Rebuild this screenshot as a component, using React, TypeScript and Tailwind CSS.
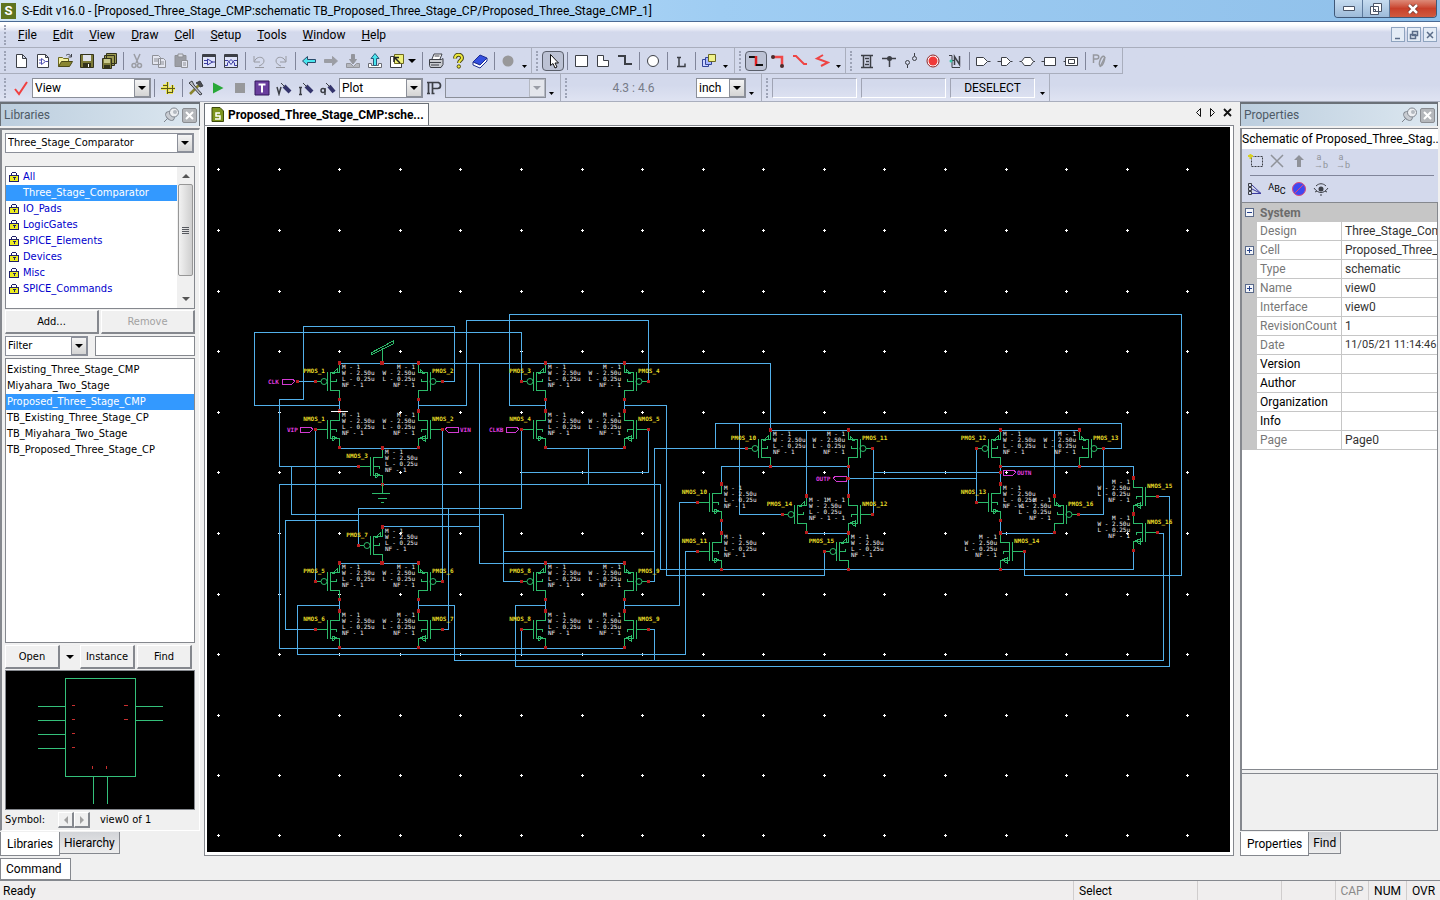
import type { ReactNode } from 'react'
import clsx from 'clsx'

/* ---------- schematic data ---------- */

type Device = { x: number; y: number; kind: 'P' | 'N'; name: string; flip?: boolean; params?: string[] }

const PARAMS = ['M - 1', 'W - 2.50u', 'L - 0.25u', 'NF - 1']

const DEVICES: Device[] = [
  { x: 339, y: 363, kind: 'P', name: 'PMOS_1' },
  { x: 418, y: 363, kind: 'P', name: 'PMOS_2', flip: true },
  { x: 339, y: 411, kind: 'N', name: 'NMOS_1' },
  { x: 418, y: 411, kind: 'N', name: 'NMOS_2', flip: true },
  { x: 382, y: 448, kind: 'N', name: 'NMOS_3' },
  { x: 545, y: 363, kind: 'P', name: 'PMOS_3' },
  { x: 624, y: 363, kind: 'P', name: 'PMOS_4', flip: true },
  { x: 545, y: 411, kind: 'N', name: 'NMOS_4' },
  { x: 624, y: 411, kind: 'N', name: 'NMOS_5', flip: true },
  { x: 382, y: 527, kind: 'P', name: 'PMOS_7' },
  { x: 339, y: 563, kind: 'P', name: 'PMOS_5' },
  { x: 418, y: 563, kind: 'P', name: 'PMOS_6', flip: true },
  { x: 339, y: 611, kind: 'N', name: 'NMOS_6' },
  { x: 418, y: 611, kind: 'N', name: 'NMOS_7', flip: true },
  { x: 545, y: 563, kind: 'P', name: 'PMOS_8' },
  { x: 624, y: 563, kind: 'P', name: 'PMOS_9', flip: true },
  { x: 545, y: 611, kind: 'N', name: 'NMOS_8' },
  { x: 624, y: 611, kind: 'N', name: 'NMOS_9', flip: true },
  { x: 770, y: 430, kind: 'P', name: 'PMOS_10' },
  { x: 848, y: 430, kind: 'P', name: 'PMOS_11', flip: true },
  { x: 721, y: 484, kind: 'N', name: 'NMOS_10' },
  { x: 721, y: 533, kind: 'N', name: 'NMOS_11' },
  { x: 806, y: 496, kind: 'P', name: 'PMOS_14' },
  // shares the W and L lines of PMOS_14
  { x: 848, y: 496, kind: 'N', name: 'NMOS_12', flip: true, params: ['M - 1', '', '', '- 1'] },
  { x: 848, y: 533, kind: 'P', name: 'PMOS_15' },
  { x: 1000, y: 430, kind: 'P', name: 'PMOS_12' },
  { x: 1079, y: 430, kind: 'P', name: 'PMOS_13', flip: true },
  { x: 1000, y: 484, kind: 'N', name: 'NMOS_13' },
  { x: 1054, y: 496, kind: 'P', name: 'PMOS_16', flip: true },
  { x: 1000, y: 533, kind: 'N', name: 'NMOS_14', flip: true },
  { x: 1133, y: 478, kind: 'N', name: 'NMOS_15', flip: true },
  { x: 1133, y: 514, kind: 'N', name: 'NMOS_16', flip: true },
]

const WIRES = [
  '358,466 279,466 279,399 303,399 303,326 454,326 454,381 442,381',
  '339,405 254,405 254,332 521,332 521,381',
  '418,405 466,405 466,320 648,320 648,381',
  '545,405 509,405 509,314 1181,314 1181,575 1024,575 1024,551',
  '339,363 770,363 770,430',
  '339,399 339,411',
  '418,399 418,411',
  '545,399 545,411',
  '624,399 624,411',
  '297,381 315,381',
  '339,448 418,448',
  '315,429 315,581',
  '442,429 442,581',
  '291,466 291,514 503,514 503,581 521,581',
  '503,551 654,551',
  '545,448 624,448',
  '588,448 588,484',
  '648,429 648,472 521,472',
  '521,429 521,508 358,508 358,545',
  '624,648 279,648 279,484 660,484 660,569 1133,569 1133,551',
  '358,520 285,520 285,629 315,629',
  '448,508 448,629 442,629',
  '382,526 479,526',
  '479,363 479,563 624,563',
  '339,563 418,563',
  '339,599 339,611',
  '418,599 418,611',
  '545,599 545,611',
  '624,599 624,611',
  '339,605 297,605 297,654 685,654 685,551 697,551',
  '418,605 454,605 454,660 1163,660 1163,533 1157,533',
  '545,605 515,605 515,666 1169,666 1169,496 1157,496',
  '624,605 679,605 679,502 697,502',
  '521,629 521,654',
  '648,629 654,629 654,660',
  '648,581 654,581 654,448 746,448',
  '624,405 666,405 666,575 824,575 824,551',
  '715,448 715,423 1121,423 1121,448 1103,448',
  '739,423 739,514 782,514',
  '770,430 1079,430',
  '721,484 721,466 848,466 848,496',
  '806,430 806,496',
  '873,448 873,514',
  '873,472 1000,472',
  '848,478 976,478',
  '976,448 976,502',
  '1000,484 1000,466 1133,466 1133,478',
  '1054,430 1054,496',
  '1103,448 1103,514 1079,514',
  '721,520 721,533',
  '806,533 848,533',
  '1000,520 1000,533 1054,533',
]

// port marker boxes: text sits left or right of the arrow body
const PORTS = [
  { d: 'M282 379h10l3 2l-3 3h-10z', name: 'CLK', x: 268, y: 384 },
  { d: 'M300 427h10l3 2l-3 3h-10z', name: 'VIP', x: 287, y: 432 },
  { d: 'M458 427h-10l-3 2l3 3h10z', name: 'VIN', x: 460, y: 432 },
  { d: 'M506 427h10l3 2l-3 3h-10z', name: 'CLKB', x: 489, y: 432 },
  { d: 'M846 476h-10l-3 2l3 3h10z', name: 'OUTP', x: 816, y: 481 },
  { d: 'M1003 470h10l3 2l-3 3h-10z', name: 'OUTN', x: 1017, y: 475 },
]

const GRID_X = [218, 279, 339, 400, 460, 521, 582, 642, 703, 763, 824, 884, 945, 1006, 1066, 1127, 1187]
const GRID_Y = [169, 230, 291, 351, 412, 472, 533, 594, 654, 715, 775, 835]

function Mosfet({ x, y, kind, name, flip, params = PARAMS }: Device) {
  const s = flip ? -1 : 1
  const px = (n: number) => x + s * n
  const arrowY = kind === 'P' ? y + 9 : y + 27
  return (
    <g>
      <g fill="none" stroke="#2cba6a">
        <path d={`M${x} ${y}V${y + 9}H${px(-9)}M${px(-9)} ${y + 9}V${y + 28}M${px(-12)} ${y + 9}V${y + 28}`} />
        <path d={`M${px(-9)} ${y + 27}H${x}V${y + 36}M${px(-9)} ${y + 18}H${px(-3)}v${kind === 'P' ? -2 : 3}`} />
        <path d={kind === 'P'
          ? `M${px(-2)} ${arrowY}L${px(-7)} ${arrowY + 2}L${px(-2)} ${arrowY - 3}Z`
          : `M${px(-2)} ${arrowY}L${px(-7)} ${arrowY - 2}L${px(-7)} ${arrowY + 3}Z`} />
        {kind === 'P'
          ? <><circle cx={px(-15)} cy={y + 18.5} r="3" shapeRendering="auto" /><path d={`M${px(-18)} ${y + 18}H${px(-24)}`} /></>
          : <path d={`M${px(-12)} ${y + 18}H${px(-24)}`} />}
      </g>
      <g fill="#b81c1c">
        <rect x={x - 1} y={y - 2} width="3" height="4" />
        <rect x={x - 1} y={y + 35} width="3" height="3" />
        <rect x={px(-24) - 1} y={y + 17} width="3" height="3" />
      </g>
      <text x={px(-14)} y={y + 10} fill="#e6dc28" textAnchor={flip ? 'start' : 'end'} className="text-[6px] font-bold">
        {name}
      </text>
      {params.map((p, i) => p && (
        <text key={i} x={px(3)} y={y + 6 + i * 6} fill="#f0f0f0" textAnchor={flip ? 'end' : 'start'} className="text-[6px]">
          {p}
        </text>
      ))}
    </g>
  )
}

function Schematic() {
  return (
    <svg className="block h-full w-full font-['DejaVu_Sans_Mono',monospace]" role="img" aria-label="Schematic">
      <g transform="translate(-207 -127)" shapeRendering="crispEdges">
        <path
          stroke="#fff"
          d={GRID_Y.map(y => GRID_X.map(x => `M${x - 1} ${y + 0.5}h3M${x + 0.5} ${y - 1}v3`).join('')).join('')}
        />
        <g fill="none" stroke="#52b0ea">
          {WIRES.map(w => <polyline key={w} points={w} />)}
        </g>
        {DEVICES.map(d => <Mosfet key={d.name} {...d} />)}
        {/* supply and ground */}
        <path d="M382 363V348M371 353L393 341v3L371 355Z" fill="none" stroke="#2cba6a" />
        <path d="M382 484v9M372 493h18M378 498h9M381 502h3" fill="none" stroke="#2cba6a" />
        <path d="M331 411h17" stroke="#fff" />
        {PORTS.map(p => (
          <g key={p.name}>
            <path d={p.d} fill="none" stroke="#d23ad2" />
            <text x={p.x} y={p.y} fill="#e03ce0" className="text-[6px] font-bold">{p.name}</text>
          </g>
        ))}
        <g fill="#b81c1c">
          <rect x="296" y="380" width="3" height="3" />
          <rect x="846" y="477" width="4" height="3" />
          <rect x="999" y="471" width="3" height="3" />
          <rect x="380" y="361" width="4" height="4" />
          <rect x="380" y="561" width="4" height="4" />
        </g>
      </g>
    </svg>
  )
}

/* ---------- icons (16x16) ---------- */

function Svg({ children }: { children: ReactNode }) {
  return (
    <svg width="16" height="16" viewBox="0 0 16 16" fill="none" stroke="#3c3f46" aria-hidden="true">
      {children}
    </svg>
  )
}

const ICONS: Record<string, ReactNode> = {
  New: <path d="M3.500 1.500h6l4 4v9h-10zM9.500 1.500v4h4" fill="#fff" />,
  'New view': <><path d="M2.500 1.500h8l3 3v10h-11zM10.500 1.500v3h3" fill="#fff" /><path d="M6.500 5.500v6l4-3zM4 7h2M4 10h2M11 8.500h2" stroke="#5050b0" /></>,
  Open: <><path d="M1.500 13.500v-9h4l1 1h5v3" fill="#f4f0a0" stroke="#6c6820" /><path d="M1.500 13.500l3-5h11l-3 5z" fill="#8a8630" stroke="#4c4a18" /><path d="M9 2.500c2-2 4-1 5 1M14.500 1v3h-3" /></>,
  Save: <><path d="M1.500 1.500h13v13h-13z" fill="#7c7a38" stroke="#33331c" /><path d="M4 2h8v6H4z" fill="#dfe2ec" stroke="none" /><path d="M4 10h8v4H4z" fill="#33331c" stroke="none" /><path d="M9.500 11v3" stroke="#fff" /></>,
  'Save all': <><path d="M5.500.500h10v10h-10zM3.500 2.500h10v10h-10z" fill="#9a9850" stroke="#33331c" /><path d="M1.500 5.500h9v10h-9z" fill="#7c7a38" stroke="#33331c" /><path d="M3 6h6v4H3z" fill="#c9c98c" stroke="none" /><path d="M3 12h6v3H3z" fill="#33331c" stroke="none" /></>,
  Cut: <g stroke="#9b9da4" strokeWidth="1.500"><path d="M5 1l4 9M11 1L7 10" /><circle cx="5" cy="12.500" r="2" /><circle cx="10.500" cy="12.500" r="2" /></g>,
  Copy: <g stroke="#8f9198" fill="#e4e6f0"><path d="M1.500 2.500h6l2 2v7h-8zM7.500 5.500h5l2 2v7h-7z" /><path d="M3 6h4M3 8h4M9 9h4M9 11h4" /></g>,
  Paste: <g stroke="#8f9196"><path d="M2 2.500h11v11H2z" fill="#9b9da4" /><path d="M5 1h5v3H5z" fill="#dcdee6" /><path d="M8.500 7.500h6v7h-6z" fill="#e4e6f0" /><path d="M10 10h3M10 12h3" /></g>,
  'Schematic view': <><path d="M1.500 1.500h13v13h-13z" fill="#dfe4fa" /><path d="M2 3h12" strokeWidth="2" /><path d="M6.500 6v6l5-3zM3 7.500h3M3 10.500h3M11 9h3" stroke="#3c3ca0" /></>,
  'Symbol view': <><path d="M1.500 1.500h13v13h-13z" fill="#dfe4fa" /><path d="M2 3h12" strokeWidth="2" /><path d="M2 12.500h2.500V10L8 6.500l3.500 3.500v2.500H14M2 7.500h3l3 4 3-4h3" stroke="#3c3ca0" /></>,
  Undo: <path d="M3 3v6h6M3.500 8.500C5 3 13 3 13 8c0 2-2 4-5 5M4 14.500h9" stroke="#989aa2" />,
  Redo: <path d="M13 3v6H7M12.500 8.500C11 3 3 3 3 8c0 2 2 4 5 5M3 14.500h9" stroke="#989aa2" />,
  Back: <path d="M1.500 8l5-4.500v3h8v3h-8v3z" fill="#4be6ee" stroke="#2b4a6a" />,
  Forward: <path d="M14.500 8l-5-4.500v3h-8v3h8v3z" fill="#9b9da4" stroke="#9b9da4" />,
  'Push in': <g stroke="#93959c"><path d="M8 11L4.500 6.500h2v-5h3v5h2z" fill="#93959c" /><path d="M1.500 10.500v4h13v-4h-3l-3 3-3-3z" fill="#b5b7be" /></g>,
  'Pop out': <><path d="M1.500 10.500v4h13v-4h-3v2h-7v-2z" fill="#fff" stroke="#6a6c74" /><path d="M8 .500L4 5.500h2.500v7h3v-7H12z" fill="#4be6ee" stroke="#235a7a" /></>,
  Goto: <><path d="M1.500 3.500h11v11h-11z" fill="#fff" /><path d="M5.500 1.500h9v9h-9z" fill="#eef07a" stroke="#6c6820" /><path d="M11 10L6 5M5 9V4.500h5" stroke="#222" strokeWidth="1.500" /></>,
  Print: <><path d="M4 6l2-5h8l-2 5" fill="#fff" /><path d="M1.500 6.500h12l1.500-1v6l-2 3H2.500l-1-2z" fill="#c9cbd0" /><path d="M2 9.500h11M3 12h8" /><path d="M6.500 3h5" /></>,
  Help: <><path d="M5 5.500C5 .500 12 .500 12 5c0 2.500-3 2-3 5" stroke="#4a4818" strokeWidth="4" /><path d="M5 5.500C5 .500 12 .500 12 5c0 2.500-3 2-3 5" stroke="#eee93a" strokeWidth="2" /><circle cx="8.800" cy="13.500" r="1.700" fill="#eee93a" stroke="#4a4818" /></>,
  Book: <><path d="M1 9l7-7 7 3-7 7z" fill="#3450e0" stroke="#1c2c90" /><path d="M1 9v3l7 3 7-7V5l-7 7z" fill="#fff" stroke="#1c2c90" /></>,
  Record: <circle cx="8" cy="8" r="5.500" fill="#98989a" stroke="none" />,
  Select: <path d="M5.500 1.500v11l2.500-2 2 4.500 2-1-2-4h3.500z" fill="#fff" stroke="#111" />,
  Box: <path d="M2.500 2.500h12v11h-12z" fill="#fff" />,
  Polygon: <path d="M2.500 2.500h6v5h5v6h-11z" fill="#fff" />,
  Path: <path d="M1 3h7v8h7" strokeWidth="2" />,
  Circle: <circle cx="8" cy="8" r="5.500" fill="#fff" />,
  Label: <path d="M6 4v10M4 4.500h4M4 13.500h8v-3" strokeWidth="1.500" />,
  Stack: <><path d="M1.500 6.500h6v7h-6z" fill="#ccd4ff" stroke="#33459a" /><path d="M4.500 4.500h6v7h-6z" fill="#aab8ff" stroke="#33459a" /><path d="M7.500 1.500h7v7h-7z" fill="#f0f28a" stroke="#6c6820" /></>,
  'Wire 90': <><path d="M1 4h6" stroke="#111" strokeWidth="2" /><path d="M8 3v10" stroke="#e02020" strokeWidth="2.500" /><path d="M8 12h7" stroke="#111" strokeWidth="2" /></>,
  'Wire corner': <><path d="M3 4h9v9" stroke="#f04848" strokeWidth="2.500" /><circle cx="3" cy="4" r="2" fill="#4c2c2c" stroke="none" /><circle cx="12" cy="13" r="2" fill="#4c2c2c" stroke="none" /></>,
  'Wire 45': <path d="M1 3h3l8 8h3" stroke="#ee4444" strokeWidth="2" />,
  'Wire any': <path d="M9 2L3 5.500l11 4L7 13" stroke="#ee4444" strokeWidth="2" />,
  Net: <path d="M2 2.500h12M2 14.500h12M4.500 3v11M11.500 3v11M6 5.500h4M7 8.500h3M6 11.500h4" strokeWidth="1.500" />,
  Solder: <><path d="M1 5.500h14M8.500 5v9" strokeWidth="1.500" /><circle cx="8.500" cy="5.500" r="2.500" fill="#3c3f46" stroke="none" /></>,
  Nodes: <><circle cx="4.500" cy="9.500" r="2" /><circle cx="11.500" cy="5.500" r="2" /><path d="M4.500 12v3M11.500 3V0" /></>,
  Stop: <><circle cx="8" cy="8" r="6" fill="#fff" stroke="#8a2020" /><circle cx="8" cy="8" r="4.500" fill="#f03a3a" stroke="none" /></>,
  Name: <><path d="M2 2.500h3v12h8M3 7.500h4" /><path d="M7.500 12V3.500l5 8V3" strokeWidth="1.500" /><circle cx="4" cy="8" r="1.500" fill="#38c8a8" stroke="none" /></>,
  'In port': <path d="M1.500 4.500h7l4 4-4 4h-7zM12.500 8.500h3" fill="#fff" />,
  'Out port': <path d="M4.500 4.500h5l4 4-4 4h-5zM13.500 8.500h2M.500 8.500h4" fill="#fff" />,
  'Bidir port': <path d="M5.500 4.500h6l3 4-3 4h-6l-3-4zM.500 8.500h2M14.500 8.500h1.500" fill="#fff" />,
  'Other port': <path d="M3.500 4.500h11v8h-11zM.500 8.500h3" fill="#fff" />,
  'Global port': <path d="M2.500 4.500h12v8h-12zM5.500 6.500h6v4h-6zM.500 8.500h2" fill="#fff" />,
  'Property text': <g stroke="#96989e" strokeWidth="1.500"><path d="M2.500 10V2h3c3 0 3 4 0 4h-3M9 14l5-10" /><ellipse cx="11" cy="8" rx="2" ry="5" transform="rotate(20 11 8)" /></g>,
  Check: <path d="M2 9l4 5 8-12" stroke="#f04040" strokeWidth="2" />,
  Probe: <><path d="M7.500 2v12M1 8.500h14M3 5.500h5M12.500 5v7M7 12.500h6" stroke="#ece65a" strokeWidth="3" /><path d="M7.500 2v12M1 8.500h14M3 5.500h5M12.500 5v7M7 12.500h6" stroke="#5c5a18" /></>,
  Tools: <><path d="M2 14L11 5" stroke="#8a8630" strokeWidth="2.500" /><path d="M8 3l4-2 3 5-3 1-2-3z" fill="#4a4c50" /><path d="M1 3l3-2 2 4 8 9-2 1-8-9z" fill="#b9bcc4" /></>,
  Run: <path d="M3 2.500v11L13.500 8z" fill="#28a838" stroke="none" />,
  Halt: <path d="M3 3h10v10H3z" fill="#97989b" stroke="none" />,
  Trace: <><path d="M1 1h14v14H1z" fill="#6a3f9e" stroke="#32195a" /><path d="M4.500 4.500h7M8 4.500v8" stroke="#fff" strokeWidth="2" /></>,
  'Probe V': <><path d="M1 7l2 7 2-7" strokeWidth="1.500" /><path d="M8 6l6 6" stroke="#34346c" strokeWidth="4" /><path d="M5 3l4 4" /></>,
  'Probe I': <><path d="M2.500 7v8M1 7.500h3M1 14.500h3" strokeWidth="1.500" /><path d="M8 6l6 6" stroke="#34346c" strokeWidth="4" /><path d="M5 3l4 4" /></>,
  'Probe Q': <><circle cx="3" cy="10.500" r="2" strokeWidth="1.500" /><path d="M5 8v7" strokeWidth="1.500" /><path d="M9 6l5 6" stroke="#34346c" strokeWidth="4" /><path d="M6 3l4 4" /></>,
  Instance: <path d="M2.500 2v12M6.500 2v12M1 2.500h12M1 13.500h3M5.500 13.500h3M6.500 8.500h5c4 0 4-6 0-6" strokeWidth="1.700" />,
  'Add property': <><path d="M4.500 3.500h11v10h-11z" strokeDasharray="2 1" /><path d="M1 3h5M3.500 1v5" stroke="#d8d020" strokeWidth="2" /></>,
  Delete: <path d="M2 2l12 12M14 2L2 14" stroke="#8f9299" strokeWidth="1.500" />,
  Promote: <path d="M8 2l5 5h-3v7H6V7H3z" fill="#8f9299" stroke="none" />,
  Filter: <><path d="M1.500 2.500h3v3h-3zM1.500 6.500h3v3h-3zM1.500 10.500h3v3h-3z" /><path d="M5 4l9 8.500H5M5 8l9 4.500" stroke="#3c3ca0" /></>,
  Hide: <><circle cx="8" cy="8" r="6.500" fill="#4048f0" stroke="#e04878" /><path d="M4 12l8-8" stroke="#e04878" /></>,
  Eye: <><path d="M1 7c4 6 10 6 14 0M2 11l2-1M8 13v2M14 11l-2-1M3 5c3-3 7-3 10 0" /><circle cx="8" cy="8" r="2.500" fill="#3c3f46" stroke="none" /></>,
}

function Tool({ name, on }: { name: string; on?: boolean }) {
  return (
    <button
      type="button"
      title={name}
      className={clsx(
        'flex h-5 w-[22px] shrink-0 items-center justify-center',
        on && 'rounded-sm border border-[#5a5f6b] bg-[#bcc2d4]'
      )}
    >
      <Svg>{ICONS[name]}</Svg>
    </button>
  )
}

const Tools = ({ names }: { names: string[] }) => <>{names.map(n => <Tool key={n} name={n} />)}</>
const Sep = () => <span className="flex h-[18px] w-[6px] shrink-0 justify-center"><span className="w-px bg-[#80859a]" /></span>

function Down({ className = 'text-black' }: { className?: string }) {
  return <svg width="8" height="4" viewBox="0 0 8 4" className={className} aria-hidden="true"><path d="M0 0h8L4 4z" fill="currentColor" /></svg>
}

function More() {
  return (
    <button type="button" title="Toolbar options" className="flex h-[18px] w-[11px] shrink-0 items-end justify-center pb-[2px]">
      <svg width="5" height="3" viewBox="0 0 5 3"><path d="M0 0h5L2.500 3z" /></svg>
    </button>
  )
}

function Bar({ children, className }: { children: ReactNode; className?: string }) {
  return (
    <div className={clsx('flex shrink-0 items-center border-r border-b border-[#a9aebd]', className)}>
      <span className="mr-1 ml-1 h-5 border-l-2 border-dotted border-[#9da3b6]" />
      {children}
    </div>
  )
}

function Combo({ label, value, className, disabled }: { label: string; value: string; className?: string; disabled?: boolean }) {
  return (
    <span className={clsx('relative block h-5 shrink-0 border border-[#8b8f99]', disabled ? 'bg-[#d3d9ec]' : 'bg-white', className)}>
      <select
        aria-label={label}
        disabled={disabled}
        defaultValue={value}
        className="block h-full w-full appearance-none bg-transparent pr-4 pl-[2px] outline-none"
      >
        <option>{value}</option>
      </select>
      <span className={clsx('pointer-events-none absolute inset-y-0 right-0 flex w-4 items-center justify-center border', disabled ? 'border-[#b4b8c2] bg-[#e4e6ec]' : 'border-[#8b8f99] bg-linear-to-b from-[#f4f4f4] to-[#d4d4d4]')}>
        <Down className={disabled ? 'text-[#9a9da6]' : 'text-black'} />
      </span>
    </span>
  )
}

/* ---------- window chrome ---------- */

const MENUS = ['File', 'Edit', 'View', 'Draw', 'Cell', 'Setup', 'Tools', 'Window', 'Help']

function TitleBar() {
  return (
    <header className="flex h-[22px] items-center border-b border-[#4a6a94] bg-linear-to-r from-[#d4e7f7] via-[#9fcdf3] to-[#8fc0ea]">
      <span className="ml-px flex h-4 w-[15px] items-center justify-center bg-[#5f7420] text-[13px] font-bold text-white">S</span>
      <h1 className="ml-[6px] flex-1 truncate">
        S-Edit v16.0 - [Proposed_Three_Stage_CMP:schematic TB_Proposed_Three_Stage_CP/Proposed_Three_Stage_CMP_1]
      </h1>
      <div className="mr-[3px] flex h-[18px] self-start overflow-hidden rounded-b border border-t-0 border-[#3f5878]">
        <button type="button" title="Minimize" className="flex w-7 items-center justify-center border-r border-[#5d7a9c] bg-linear-to-b from-[#c6dcf0] to-[#9dbbd9]">
          <svg width="12" height="5"><path d="M.5.500h11v4H.5z" fill="#fff" stroke="#4a5568" /></svg>
        </button>
        <button type="button" title="Restore" className="flex w-[27px] items-center justify-center border-r border-[#5d7a9c] bg-linear-to-b from-[#c6dcf0] to-[#9dbbd9]">
          <svg width="12" height="12" fill="#fff" stroke="#4a5568"><path d="M3.500.500h8v8h-8zM.500 3.500h8v8h-8zM3.500 6.500h2v2h-2z" /></svg>
        </button>
        <button type="button" title="Close" className="flex w-[46px] items-center justify-center bg-linear-to-b from-[#dd8a78] via-[#c8402a] to-[#d05a40]">
          <svg width="12" height="10" fill="none"><path d="M2 1l8 8M10 1L2 9" stroke="#6b3028" strokeWidth="4" /><path d="M2 1l8 8M10 1L2 9" stroke="#fff" strokeWidth="2.500" /></svg>
        </button>
      </div>
    </header>
  )
}

const MDI = [
  { name: 'Minimize view', d: 'M3 9.500h5' },
  { name: 'Restore view', d: 'M4.500 2.500h5v4h-5zM2.500 5.500h5v4h-5z' },
  { name: 'Close view', d: 'M3 3l6 6M9 3L3 9' },
]

function MenuBar() {
  return (
    <nav className="flex h-[26px] items-center border-b border-[#a9aebd] bg-linear-to-b from-white from-10% via-[#e6e9f5] via-30% to-[#d3d9ec] to-40%">
      <span className="mr-1 ml-1 h-5 border-l-2 border-dotted border-[#9da3b6]" />
      {MENUS.map(m => (
        <button key={m} type="button" className="px-2"><u>{m[0]}</u>{m.slice(1)}</button>
      ))}
      <span className="ml-auto flex gap-[2px] pr-[3px]">
        {MDI.map(b => (
          <button key={b.name} type="button" title={b.name} className="flex h-[15px] w-[14px] items-center justify-center border border-[#8fa4bf] bg-[#e4ecf6]">
            <svg width="12" height="12" fill="none" stroke="#5a6c88" strokeWidth="1.500"><path d={b.d} /></svg>
          </button>
        ))}
      </span>
    </nav>
  )
}

const Field = () => <span className="mr-1 h-5 w-[85px] border border-[#a0a4b4] border-r-white border-b-white" />

function Toolbars() {
  return (
    <div className="border-b border-[#a9aebd] bg-linear-to-b from-[#d3d9ec] from-70% to-[#dfe3f2]">
      <div className="flex h-[26px]">
        <Bar className="pr-px">
          <Tools names={['New', 'New view', 'Open', 'Save', 'Save all']} />
          <Sep />
          <Tools names={['Cut', 'Copy', 'Paste']} />
          <Sep />
          <Tools names={['Schematic view', 'Symbol view']} />
          <Sep />
          <Tools names={['Undo', 'Redo']} />
          <Sep />
          <Tools names={['Back', 'Forward', 'Push in', 'Pop out', 'Goto']} />
          <button type="button" title="Go to list" className="w-[11px]"><Down /></button>
          <Sep />
          <Tools names={['Print', 'Help', 'Book']} />
          <Sep />
          <Tool name="Record" />
          <More />
        </Bar>
        <Bar className="pr-[3px]">
          <Tool name="Select" on />
          <Sep />
          <Tools names={['Box', 'Polygon', 'Path']} />
          <Sep />
          <Tool name="Circle" />
          <Sep />
          <Tool name="Label" />
          <Sep />
          <Tool name="Stack" />
          <More />
        </Bar>
        <Bar className="pr-px">
          <Tool name="Wire 90" on />
          <Tools names={['Wire corner', 'Wire 45', 'Wire any']} />
          <More />
        </Bar>
        <Bar className="pr-px">
          <Tools names={['Net', 'Solder', 'Nodes', 'Stop', 'Name']} />
          <Sep />
          <Tools names={['In port', 'Out port', 'Bidir port', 'Other port', 'Global port']} />
          <Sep />
          <Tool name="Property text" />
          <More />
        </Bar>
      </div>
      <div className="flex h-[27px]">
        <Bar className="border-b-0 pr-[3px]">
          <Tool name="Check" />
          <Combo label="Mode" value="View" className="w-[119px]" />
          <Sep />
          <Tool name="Probe" />
          <Sep />
          <Tools names={['Tools', 'Run', 'Halt', 'Trace', 'Probe V', 'Probe I', 'Probe Q']} />
          <Combo label="Plot" value="Plot" className="w-[84px]" />
          <Tool name="Instance" />
          <Combo label="Instance" value="" className="w-[101px]" disabled />
          <More />
        </Bar>
        <Bar className="border-b-0 pr-1">
          <span className="w-[125px] text-center text-[#777b88]">4.3 : 4.6</span>
          <Combo label="Units" value="inch" className="w-[50px]" />
          <More />
        </Bar>
        <Bar className="border-b-0 pr-px">
          <Field />
          <Field />
          <button type="button" className="mr-[2px] h-5 w-[85px] border border-[#a0a4b4] border-r-white border-b-white">DESELECT</button>
          <More />
        </Bar>
      </div>
    </div>
  )
}

/* ---------- docked panels ---------- */

function PanelHeader({ title }: { title: string }) {
  return (
    <div className="flex h-6 items-center border-t-2 border-r border-l border-[#6b7178] bg-linear-to-r from-[#bccede] to-[#dce7f0] pr-[2px] pl-[3px]">
      <h2 className="flex-1 text-[#4e5a66]">{title}</h2>
      <button type="button" title="Auto hide" className="mr-[2px]">
        <svg width="17" height="16" fill="#c8ccd2" stroke="#7f858e">
          <path d="M1 15l4-4" />
          <ellipse cx="7" cy="9" rx="5" ry="3.500" transform="rotate(45 7 9)" />
          <circle cx="11" cy="5.500" r="4.500" fill="#eceef1" />
          <circle cx="12" cy="5" r="2" fill="#b4b9c0" stroke="none" />
        </svg>
      </button>
      <button type="button" title="Close" className="flex h-[15px] w-[15px] items-center justify-center rounded-xs border border-[#8a8d92] bg-[#b4b7bb]">
        <svg width="9" height="9" stroke="#fff" strokeWidth="2"><path d="M1 1l7 7M8 1L1 8" /></svg>
      </button>
    </div>
  )
}

function PanelTabs({ tabs }: { tabs: string[] }) {
  return (
    <div className="flex h-[27px] items-start pt-px" role="tablist">
      {tabs.map((t, i) => (
        <button
          key={t}
          type="button"
          role="tab"
          aria-selected={i === 0}
          className={i === 0
            ? 'h-6 border border-t-0 border-[#85888e] bg-white px-[6px]'
            : 'h-[22px] border border-t-0 border-l-0 border-[#85888e] bg-linear-to-b from-[#d2d4d8] to-[#eeeeee] px-1'}
        >
          {t}
        </button>
      ))}
    </div>
  )
}

function Btn({ children, className, disabled }: { children: ReactNode; className?: string; disabled?: boolean }) {
  return (
    <button
      type="button"
      disabled={disabled}
      className={clsx('border border-r-2 border-b-2 border-white border-r-[#85888e] border-b-[#85888e] bg-[#f0f0f0] disabled:text-[#a2a2a2]', className)}
    >
      {children}
    </button>
  )
}

const LIBRARIES = ['All', 'Three_Stage_Comparator', 'IO_Pads', 'LogicGates', 'SPICE_Elements', 'Devices', 'Misc', 'SPICE_Commands']
const CELLS = [
  'Existing_Three_Stage_CMP',
  'Miyahara_Two_Stage',
  'Proposed_Three_Stage_CMP',
  'TB_Existing_Three_Stage_CP',
  'TB_Miyahara_Two_Stage',
  'TB_Proposed_Three_Stage_CP',
]

function Lock() {
  return (
    <svg width="10" height="10" viewBox="0 0 10 10" className="block" shapeRendering="crispEdges" aria-hidden="true">
      <path d="M2.500 4V1.500l1-1h3l1 1V4" fill="none" stroke="#20206a" />
      <path d="M.5 3.500h9v6h-9z" fill="#ecec20" stroke="#20206a" />
      <path d="M4 5.500h3M5.500 5v3" stroke="#20206a" />
    </svg>
  )
}

function SymbolPreview() {
  return (
    <svg className="block h-[140px] w-full border border-[#85888e] bg-black" fill="none" stroke="#34c07a" shapeRendering="crispEdges" role="img" aria-label="Symbol preview">
      <path d="M59.500 7.500h70v98h-70zM32 35.500h27M32 49.500h27M32 63.500h27M32 77.500h27M130 35.500h27M130 49.500h27M87.500 106v27M101.500 106v27" />
      <path d="M66 34.500h3M66 48.500h3M66 62.500h3M66 76.500h3M118 34.500h4M118 48.500h4M86.500 95v3M100.500 95v3" stroke="#c83030" />
    </svg>
  )
}

function LibrariesPanel() {
  return (
    <aside className="flex w-[200px] shrink-0 flex-col">
      <PanelHeader title="Libraries" />
      <div className="mt-[2px] flex min-h-0 flex-1 flex-col border-t-2 border-l-2 border-[#85888e] border-r border-b border-r-white border-b-white pt-[3px] pr-1 pl-[3px] font-['DejaVu_Sans_Condensed','DejaVu_Sans',sans-serif] text-[11px]">
        <Combo label="Library" value="Three_Stage_Comparator" className="mr-px" />
        <div className="mt-[13px] flex h-[143px] shrink-0 border border-[#85888e] bg-white">
          <ul className="flex-1 pt-[2px] text-[#0000cc]">
            {LIBRARIES.map(l => {
              const sel = l === 'Three_Stage_Comparator'
              return (
                <li key={l} className={clsx('flex h-4 items-center pl-[3px]', sel && 'bg-[#3399ff] text-white')}>
                  <span className="w-[14px]">{!sel && <Lock />}</span>
                  {l}
                </li>
              )
            })}
          </ul>
          <div className="flex w-[17px] flex-col items-center justify-between bg-[#f0f0f0] py-[7px]">
            <Down className="rotate-180 text-[#555]" />
            <span className="mt-[6px] mb-auto flex h-[92px] w-[15px] flex-col items-center justify-center gap-px rounded-xs border border-[#979797] bg-linear-to-r from-[#f2f2f2] to-[#cfcfcf]">
              {[0, 1, 2, 3].map(i => <i key={i} className="h-px w-[7px] bg-[#55585e]" />)}
            </span>
            <Down className="text-[#555]" />
          </div>
        </div>
        <div className="mt-px flex gap-[2px]">
          <Btn className="h-6 flex-1">Add...</Btn>
          <Btn className="h-6 flex-1" disabled>Remove</Btn>
        </div>
        <div className="my-[2px] flex gap-[7px]">
          <Combo label="Filter by" value="Filter" className="w-[83px]" />
          <input type="text" aria-label="Filter text" className="h-5 w-full min-w-0 border border-[#85888e] bg-white px-1" />
        </div>
        <ul className="min-h-0 flex-1 border border-[#85888e] bg-white pt-[3px]">
          {CELLS.map(c => (
            <li key={c} className={clsx('flex h-4 items-center pl-px', c === 'Proposed_Three_Stage_CMP' && 'bg-[#3399ff] text-white')}>{c}</li>
          ))}
        </ul>
        <div className="mt-[2px] mb-px flex">
          <Btn className="h-6 w-[55px]">Open</Btn>
          <button type="button" title="Open options" className="flex w-5 items-center justify-center"><Down /></button>
          <Btn className="h-6 w-[55px]">Instance</Btn>
          <Btn className="ml-[2px] h-6 w-[55px]">Find</Btn>
        </div>
        <SymbolPreview />
        <div className="flex h-5 items-center">
          <span className="w-[53px]">Symbol:</span>
          <Btn className="flex h-4 w-4 items-center justify-center" disabled><Down className="shrink-0 rotate-90 text-[#a2a2a2]" /></Btn>
          <Btn className="flex h-4 w-4 items-center justify-center" disabled><Down className="shrink-0 -rotate-90 text-[#a2a2a2]" /></Btn>
          <span className="ml-[10px]">view0 of 1</span>
        </div>
      </div>
      <PanelTabs tabs={['Libraries', 'Hierarchy']} />
    </aside>
  )
}

function DesignView() {
  return (
    <main className="flex min-w-0 flex-1 flex-col pt-px pr-[6px] pb-[2px] pl-1">
      <div className="flex h-[22px] items-stretch">
        <button type="button" className="flex items-center gap-1 border border-b-0 border-[#6b7178] bg-white pr-1 pl-[6px] font-bold">
          <svg width="13" height="15" viewBox="0 0 13 15" aria-hidden="true">
            <path d="M1 .5h8l3.500 3.500v10.500H1z" fill="#7d941e" stroke="#3c4a0c" />
            <path d="M9 6H5v3h4v3H4" fill="none" stroke="#fff" strokeWidth="1.500" />
          </svg>
          Proposed_Three_Stage_CMP:sche...
        </button>
        <span className="ml-auto flex items-center gap-[7px] pr-[2px] pb-1">
          <button type="button" title="Previous"><svg width="7" height="9"><path d="M5.500.500v8l-4-4z" fill="none" stroke="#111" /></svg></button>
          <button type="button" title="Next"><svg width="7" height="9"><path d="M1.500.500v8l4-4z" fill="none" stroke="#111" /></svg></button>
          <button type="button" title="Close"><svg width="9" height="9"><path d="M1 1l7 7M8 1L1 8" stroke="#111" strokeWidth="1.800" /></svg></button>
        </span>
      </div>
      <div className="min-h-0 flex-1 border border-[#85888e] bg-white p-[3px] pt-px pl-[2px]">
        <div className="h-full bg-black"><Schematic /></div>
      </div>
    </main>
  )
}

type Row = { label: string; value: string; group?: boolean; edit?: boolean; small?: boolean }

const PROPS: Row[] = [
  { label: 'Design', value: 'Three_Stage_Comparator' },
  { label: 'Cell', value: 'Proposed_Three_Stage_CMP', group: true },
  { label: 'Type', value: 'schematic' },
  { label: 'Name', value: 'view0', group: true },
  { label: 'Interface', value: 'view0' },
  { label: 'RevisionCount', value: '1' },
  { label: 'Date', value: '11/05/21 11:14:46', small: true },
  { label: 'Version', value: '', edit: true },
  { label: 'Author', value: '', edit: true },
  { label: 'Organization', value: '', edit: true },
  { label: 'Info', value: '', edit: true },
  { label: 'Page', value: 'Page0' },
]

function Expander({ open }: { open?: boolean }) {
  return (
    <svg width="9" height="9" className="mx-auto block" stroke="#5a6a8a" shapeRendering="crispEdges" role="img" aria-label={open ? 'Collapse' : 'Expand'}>
      <path d="M.5.500h8v8h-8z" fill="#f4f6fa" />
      <path d={open ? 'M2 4.500h5' : 'M2 4.500h5M4.500 2v5'} stroke="#24408a" />
    </svg>
  )
}

const LetterTool = ({ title, children }: { title: string; children: ReactNode }) => (
  <button type="button" title={title} className="flex h-5 w-[22px] items-center justify-center text-[9px] leading-none">{children}</button>
)

function PropertiesPanel() {
  return (
    <aside className="flex w-[200px] shrink-0 flex-col pr-[2px]">
      <PanelHeader title="Properties" />
      <div className="mt-[2px] flex min-h-0 flex-1 flex-col border-t border-l-2 border-[#85888e]">
        <input type="text" readOnly aria-label="Selection" value="Schematic of Proposed_Three_Stag..." className="h-5 w-full bg-white outline-none" />
        <div className="flex h-[53px] shrink-0 flex-col justify-between bg-[#d3d9ec] pt-[2px] pb-[3px] pl-[2px]">
          <div className="flex">
            <Tools names={['Add property', 'Delete', 'Promote']} />
            <LetterTool title="Rename"><span className="-space-y-px text-[#8f9299]"><span className="block pr-1">a</span><span className="block">→b</span></span></LetterTool>
            <LetterTool title="Rename all"><span className="-space-y-px text-[#8f9299]"><span className="block pr-1">a</span><span className="block">→b</span></span></LetterTool>
          </div>
          <hr className="mr-1 ml-[6px] border-[#80859a]" />
          <div className="flex">
            <Tool name="Filter" />
            <LetterTool title="Show text"><span className="pb-1">A</span><span>B</span><span className="pt-1">C</span></LetterTool>
            <Tools names={['Hide', 'Eye']} />
          </div>
        </div>
        <div className="min-h-0 flex-1 overflow-hidden border border-l-0 border-[#85888e] bg-white">
          <table className="w-full table-fixed border-separate border-spacing-0 text-left whitespace-nowrap">
            <colgroup><col className="w-[15px]" /><col className="w-[85px]" /><col /></colgroup>
            <thead>
              <tr className="h-[19px] bg-[#c6c6c6] text-[#6c6c6c]">
                <td><Expander open /></td>
                <th colSpan={2} scope="colgroup" className="pl-[3px] leading-4 font-bold">System</th>
              </tr>
            </thead>
            <tbody>
              {PROPS.map(r => (
                <tr key={r.label} className="h-[19px]">
                  <td className="bg-[#c6c6c6]">{r.group && <Expander />}</td>
                  <th scope="row" className={clsx('border-r border-b border-[#c6c6c6] pl-[3px] leading-4 font-normal', r.edit ? 'text-black' : 'text-[#777777]')}>{r.label}</th>
                  <td className={clsx('overflow-hidden border-b border-[#c6c6c6] pl-[3px] leading-4 text-[#333333]', r.small && 'text-[11px]')}>{r.value}</td>
                </tr>
              ))}
            </tbody>
          </table>
        </div>
        <div className="mt-[3px] h-[58px] shrink-0 border border-l-0 border-[#85888e]" />
      </div>
      <PanelTabs tabs={['Properties', 'Find']} />
    </aside>
  )
}

function StatusBar() {
  const cell = 'flex h-full items-center border-l border-[#d0cdcd]'
  return (
    <footer className="flex h-5 items-center border-t border-[#85888e] bg-[#f0eeee]">
      <span className="flex-1 pl-[3px]">Ready</span>
      <span className={clsx(cell, 'w-[124px] pl-[5px]')}>Select</span>
      <span className={clsx(cell, 'w-[84px]')} />
      <span className={clsx(cell, 'w-[54px]')} />
      <span className={clsx(cell, 'w-[33px] justify-center text-[#8a8a8a]')}>CAP</span>
      <span className={clsx(cell, 'w-[38px] justify-center')}>NUM</span>
      <span className={clsx(cell, 'w-[34px] justify-center')}>OVR</span>
    </footer>
  )
}

export default function App() {
  return (
    <div className="flex h-screen flex-col overflow-hidden bg-[#f0f0f0] font-['Roboto','Open_Sans',sans-serif] text-[12px] leading-4 text-black">
      <TitleBar />
      <MenuBar />
      <Toolbars />
      <div className="flex min-h-0 flex-1">
        <LibrariesPanel />
        <DesignView />
        <PropertiesPanel />
      </div>
      <div className="flex h-[22px] shrink-0">
        <button type="button" className="border border-[#85888e] bg-white pr-2 pl-[5px]">Command</button>
      </div>
      <StatusBar />
    </div>
  )
}
